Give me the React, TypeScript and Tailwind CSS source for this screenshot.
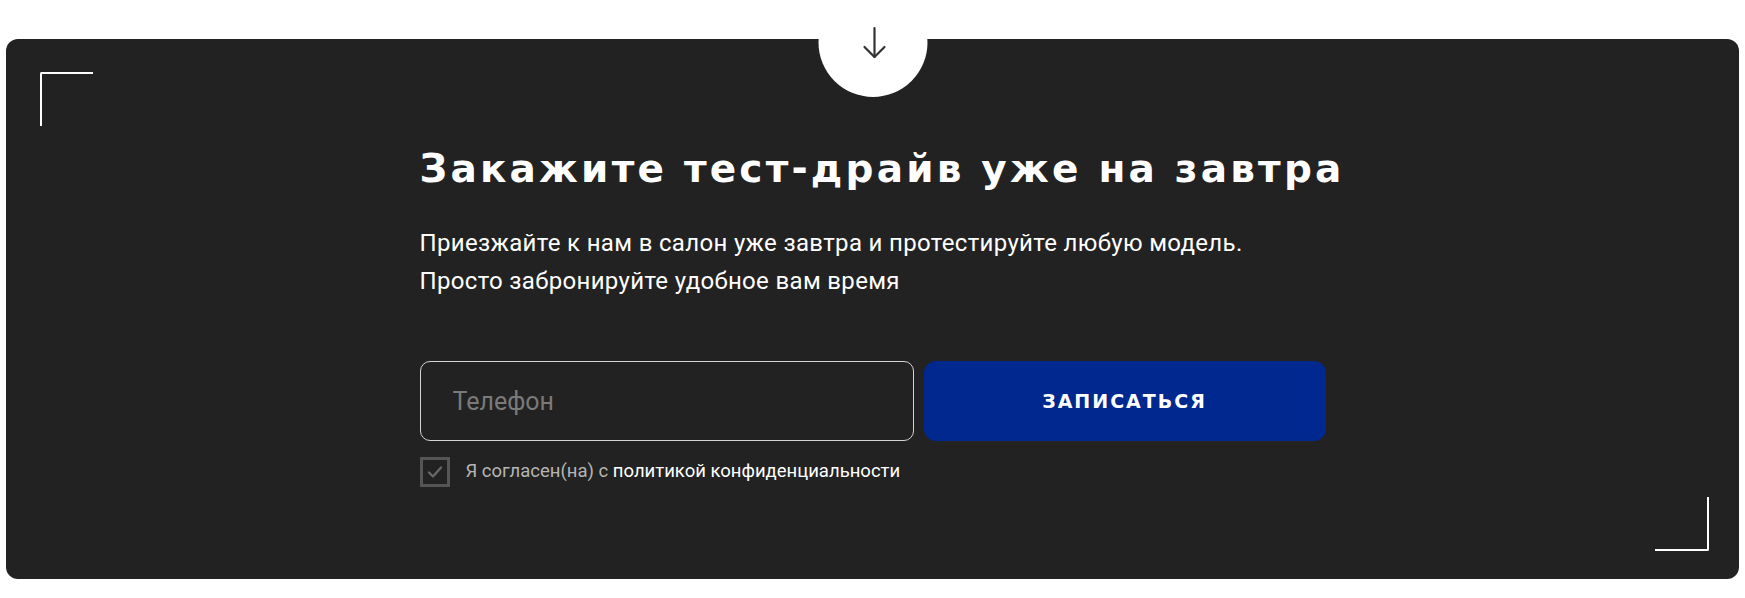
import { useState } from 'react';

export default function App() {
    const [agreed, setAgreed] = useState(true);

    return (
        <div className="min-h-screen bg-white px-[6px] pt-[39px] font-['Roboto',sans-serif]">
            <section className="relative h-[540px] rounded-[12px] bg-[#222222]">
                {/* Corner brackets */}
                <div className="absolute left-[34px] top-[33px] h-[54px] w-[53px] rounded-tl-[2px] border-l-2 border-t-2 border-white" />
                <div className="absolute bottom-[28px] right-[30px] h-[54px] w-[54px] rounded-br-[2px] border-b-2 border-r-2 border-white" />

                {/* Scroll circle */}
                <div className="absolute left-1/2 top-[-51px] h-[109px] w-[109px] -translate-x-1/2 rounded-full bg-white">
                    <svg
                        className="absolute left-[44px] top-[38px]"
                        width="24"
                        height="34"
                        viewBox="0 0 24 34"
                        fill="none"
                        stroke="#333333"
                        strokeWidth="2.2"
                        strokeLinecap="round"
                        strokeLinejoin="round"
                    >
                        <path d="M12 2v29" />
                        <path d="M2 21l10 10 10-10" />
                    </svg>
                </div>

                {/* Content */}
                <div className="mx-auto w-[906px] pt-[110px]">
                    <h2 className="whitespace-nowrap font-['DejaVu_Sans',sans-serif] text-[39px] font-bold leading-[39px] tracking-[3.2px] text-white">
                        Закажите тест-драйв уже на завтра
                    </h2>

                    <p className="mt-[36px] text-[24px] leading-[38px] tracking-[0.33px] text-white">
                        Приезжайте к нам в салон уже завтра и протестируйте любую модель.
                        <br />
                        Просто забронируйте удобное вам время
                    </p>

                    <form className="mt-[61px]" onSubmit={(e) => e.preventDefault()}>
                        <div className="flex gap-[10px]">
                            <input
                                type="tel"
                                placeholder="Телефон"
                                className="h-[80px] w-[494px] shrink-0 rounded-[10px] border border-[#d4d4d4] bg-transparent pl-[32px] text-[25px] text-white outline-none placeholder:text-[#7a7a7a]"
                            />
                            <button
                                type="submit"
                                className="h-[80px] w-[402px] shrink-0 rounded-[12px] bg-[#00288f] font-['DejaVu_Sans',sans-serif] text-[19px] font-bold tracking-[2px] text-white"
                            >
                                ЗАПИСАТЬСЯ
                            </button>
                        </div>

                        <label className="mt-[16px] flex cursor-pointer items-center gap-[16px]">
                            <span
                                className="flex h-[30px] w-[30px] items-center justify-center border-[3px] border-[#555555]"
                                onClick={() => setAgreed(!agreed)}
                            >
                                {agreed && (
                                    <svg width="16" height="14" viewBox="0 0 16 14" fill="none" stroke="#666666" strokeWidth="2.4" strokeLinecap="round" strokeLinejoin="round">
                                        <path d="M2 7.5l4 4 8-9" />
                                    </svg>
                                )}
                            </span>
                            <span className="text-[18.5px] text-[#b5b5b5]">
                                Я согласен(на) с <span className="text-white">политикой конфиденциальности</span>
                            </span>
                        </label>
                    </form>
                </div>
            </section>
        </div>
    );
}
